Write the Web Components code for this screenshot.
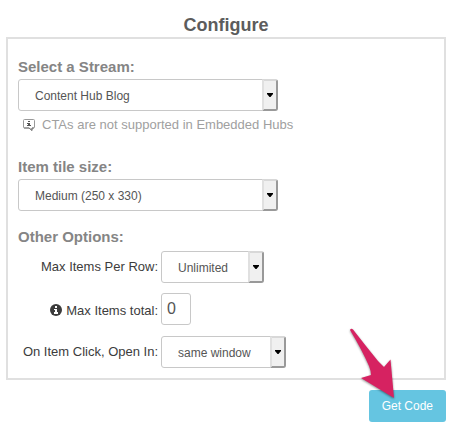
<!DOCTYPE html>
<html lang="en">
<head>
<meta charset="utf-8">
<meta name="viewport" content="width=device-width, initial-scale=1">
<title>Configure</title>
<style>
    body {
        margin: 0;
        padding: 13px 13px 10px 6px;
        background: #fff;
        color: #444;
        font: 13px/20px "Liberation Sans", Arial, sans-serif;
    }
</style>
</head>
<body>
<embed-configurator></embed-configurator>

<template id="embed-configurator">
    <style>
        :host { display: block; }
        h1 {
            margin: 0;
            color: #5c5c5c;
            font-size: 18px;
            line-height: 24px;
            text-align: center;
        }
        form { margin: 0; }
        .panel {
            display: flex;
            flex-direction: column;
            padding: 18px 10px 10px;
            border: 2px solid #e0e0e0;
        }
        .section { margin-top: 22px; }
        .options {
            display: flex;
            flex-direction: column;
            gap: 10px;
        }
        h2 {
            margin: 16px 0 4px;
            color: #858585;
            font-size: 15px;
            line-height: 20px;
        }
        footer {
            display: flex;
            justify-content: flex-end;
            margin-top: 10px;
        }
    </style>
    <h1>Configure</h1>
    <form>
        <div class="panel">
            <select-field options="Content Hub Blog">Select a Stream:</select-field>
            <field-hint>CTAs are not supported in Embedded Hubs</field-hint>
            <select-field class="section" options="Small (200 x 265)|Medium (250 x 330)|Large (300 x 395)" value="Medium (250 x 330)">Item tile size:</select-field>
            <h2>Other Options:</h2>
            <div class="options">
                <select-field inline style="--control-width: 103px" options="Unlimited|1|2|3|4">Max Items Per Row:</select-field>
                <number-field value="0">Max Items total:</number-field>
                <select-field inline style="--control-width: 125px" options="same window|new window">On Item Click, Open In:</select-field>
            </div>
        </div>
        <footer><action-button>Get Code</action-button></footer>
    </form>
</template>

<template id="select-field">
    <style>
        :host {
            display: flex;
            flex-direction: column;
            align-items: flex-start;
            gap: 2px;
        }
        :host([inline]) {
            flex-direction: row;
            align-items: center;
            gap: 3px;
        }
        label {
            color: #858585;
            font-size: 15px;
            font-weight: bold;
            line-height: 20px;
        }
        :host([inline]) label {
            flex: 0 0 140px;
            color: #3c3c3c;
            font-size: 13px;
            font-weight: normal;
            text-align: right;
        }
        .control {
            display: flex;
            box-sizing: border-box;
            width: var(--control-width, 260px);
            max-width: 100%;
            height: 32px;
            position: relative;
        }
        select {
            appearance: none;
            box-sizing: border-box;
            width: 100%;
            margin: 0;
            padding: 1px 20px 0 16px;
            border: 1px solid #c8c8c8;
            border-radius: 3px;
            background: #fff;
            color: #555;
            font: inherit;
            font-size: 12px;
        }
        /* Bevelled drop button lying over the right end of the select. */
        .drop {
            position: absolute;
            top: 0;
            right: 0;
            bottom: 0;
            display: flex;
            align-items: center;
            justify-content: center;
            box-sizing: border-box;
            width: 16px;
            border: 2px solid;
            border-color: #d8d8d8 #999 #999 #e0e0e0;
            border-radius: 0 3px 3px 0;
            background: #f0f0f0;
            pointer-events: none;
        }
        svg { display: block; width: 6px; height: 4px; }
    </style>
    <label for="control"><slot></slot></label>
    <div class="control">
        <select id="control"></select>
        <span class="drop"><svg viewBox="0 0 6 4" aria-hidden="true"><path d="M0 0h6v1L3.5 4h-1L0 1z"/></svg></span>
    </div>
</template>

<template id="number-field">
    <style>
        :host {
            display: flex;
            align-items: center;
            gap: 3px;
        }
        label {
            display: flex;
            flex: 0 0 140px;
            align-items: center;
            justify-content: flex-end;
            gap: 4px;
            padding-top: 3px;
            box-sizing: border-box;
            color: #3c3c3c;
        }
        input {
            box-sizing: border-box;
            width: 30px;
            height: 32px;
            margin: 0 0 1px;
            padding: 0 5px;
            border: 1px solid #c8c8c8;
            border-radius: 3px;
            color: #555;
            font: inherit;
            font-size: 16px;
        }
        svg { display: block; width: 12px; height: 12px; margin-bottom: 2px; }
    </style>
    <label for="control">
        <svg viewBox="0 0 12 12" aria-hidden="true">
            <circle cx="6" cy="6" r="6" fill="#3c3c3c"/>
            <path fill="#fff" d="M5 2h2v2H5zM4 5h3v3h1v2H4V8h1V6H4z"/>
        </svg>
        <slot></slot>
    </label>
    <input id="control" type="text" inputmode="numeric">
</template>

<template id="field-hint">
    <style>
        :host {
            display: flex;
            align-items: center;
            gap: 7px;
            margin-top: 4px;
            padding-left: 5px;
            color: #a0a0a0;
        }
        svg { display: block; width: 12px; height: 12px; }
    </style>
    <svg viewBox="0 0 12 12" aria-hidden="true">
        <path d="M1.500 .5h9a1 1 0 0 1 1 1v6.500a1 1 0 0 1-1 1H9v2.300L6 9H1.500a1 1 0 0 1-1-1V1.500a1 1 0 0 1 1-1z" fill="#fff" stroke="#999"/>
        <path d="M1 9h5l3 2.500V9h2" fill="none" stroke="#777"/>
        <path fill="#555" d="M5 2h2v1H5zM4 4h3v2h1v1H4V6h1V5H4z"/>
    </svg>
    <slot></slot>
</template>

<template id="action-button">
    <style>
        :host { display: block; position: relative; }
        button {
            display: block;
            height: 32px;
            margin: 0;
            padding: 0 13px;
            border: 0;
            border-radius: 3px;
            background: #65c5e1;
            color: #fff;
            font: inherit;
            font-size: 12px;
        }
        /* Pointer arrow whose tip touches the button. */
        svg {
            position: absolute;
            left: -22px;
            top: -66px;
            width: 52px;
            height: 80px;
            pointer-events: none;
            filter: drop-shadow(0 1px 1px rgba(0, 0, 0, .45));
        }
    </style>
    <button type="button"><slot></slot></button>
    <svg viewBox="0 0 52 80" aria-hidden="true">
        <path fill="#d62261" d="M3 6Q4 4 6 5.500Q18 21 31 37L37 43 43.500 35.500 47 74 14 54 24 51Q24 47 22 42 15 26 3 6z"/>
    </svg>
</template>

<script>
/**
 * Clone the template that shares the element's tag name into an open shadow root.
 *
 * @param {HTMLElement} element
 * @returns {ShadowRoot}
 */
function render(element) {
    const template = document.getElementById(element.localName);
    const root = element.attachShadow({ mode: "open" });
    root.appendChild(template.content.cloneNode(true));
    return root;
}

/** Labelled drop-down; `options` holds the choices, separated by "|". */
class SelectField extends HTMLElement {
    connectedCallback() {
        if (this.shadowRoot) return;
        const select = render(this).querySelector("select");
        for (const text of this.getAttribute("options").split("|")) {
            select.add(new Option(text, text));
        }
        if (this.hasAttribute("value")) select.value = this.getAttribute("value");
    }
}

/** Labelled text box for a count. */
class NumberField extends HTMLElement {
    connectedCallback() {
        if (this.shadowRoot) return;
        render(this).querySelector("input").value = this.getAttribute("value") ?? "";
    }
}

customElements.define("select-field", SelectField);
customElements.define("number-field", NumberField);

for (const name of ["field-hint", "action-button", "embed-configurator"]) {
    customElements.define(name, class extends HTMLElement {
        connectedCallback() {
            if (!this.shadowRoot) render(this);
        }
    });
}
</script>
</body>
</html>
